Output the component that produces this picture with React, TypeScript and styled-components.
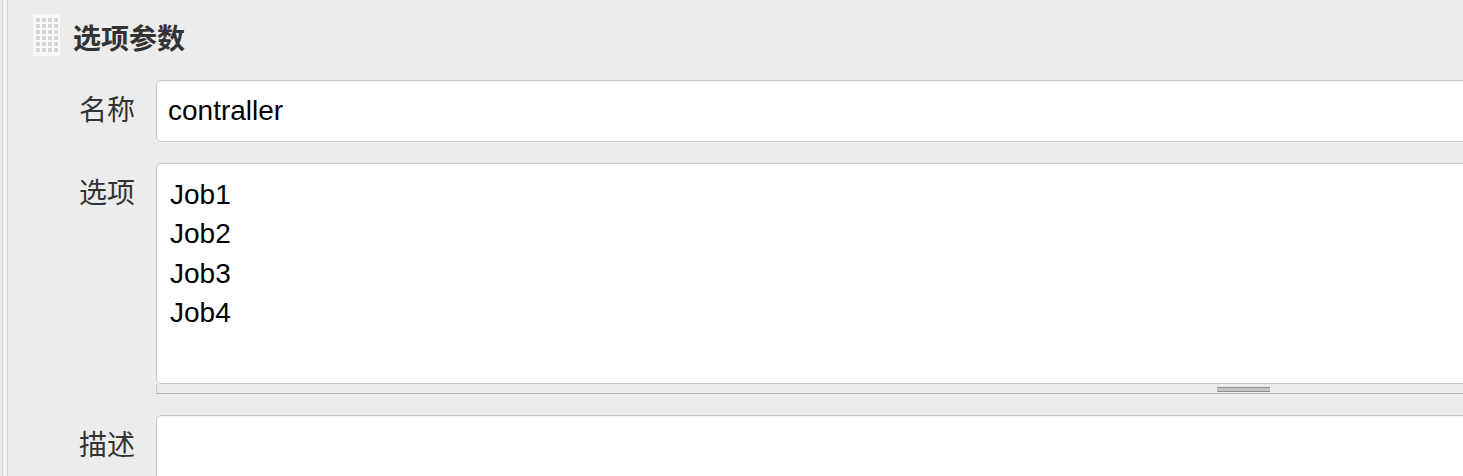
import React, { useState } from "react";
import styled, { createGlobalStyle } from "styled-components";

const GlobalStyle = createGlobalStyle`
	html, body {
		margin: 0;
		padding: 0;
		background: #ececec;
		overflow: hidden;
	}
	body {
		font-family: "Liberation Sans", Arial, "Noto Sans CJK SC", sans-serif;
	}
`;

const App = () => {
	const [name, setName] = useState("contraller");
	const [choices, setChoices] = useState("Job1\nJob2\nJob3\nJob4");
	const [desc, setDesc] = useState("");

	return (
		<>
			<GlobalStyle />
			<Page>
				<Rail>
					<Section>
						<Header>
							<DragHandle />
							<Title>选项参数</Title>
						</Header>
						<Form>
							<Label>名称</Label>
							<TextInput value={name} onChange={(e) => setName(e.target.value)} />

							<Label>选项</Label>
							<TextareaWrap>
								<Textarea value={choices} onChange={(e) => setChoices(e.target.value)} />
								<ResizeBar>
									<Grip />
								</ResizeBar>
							</TextareaWrap>

							<Label>描述</Label>
							<DescBox value={desc} onChange={(e) => setDesc(e.target.value)} />
						</Form>
					</Section>
				</Rail>
			</Page>
		</>
	);
};

// 4 x 6 dotted grip like the jenkins repeatable handle
const DragHandle = () => {
	const dots = [];
	for (let r = 0; r < 6; r++) {
		for (let c = 0; c < 4; c++) {
			dots.push(<rect key={`${r}-${c}`} x={3 + c * 6} y={4 + r * 6} width={4} height={4} fill="#d6d6d6" />);
		}
	}
	return (
		<HandleBox>
			<svg width="27" height="42" viewBox="0 0 27 42">
				<rect x="0" y="0" width="27" height="42" fill="#f8f8f8" />
				{dots}
			</svg>
		</HandleBox>
	);
};

const Page = styled.div`
	padding-left: 2px;
	height: 476px;
	box-sizing: border-box;
`;

const Rail = styled.div`
	height: 100%;
	border-left: 1px solid #d4d4d4;
	background: #f4f4f4;
	padding-left: 4px;
`;

const Section = styled.div`
	height: 100%;
	border-left: 1px solid #d6d6d6;
	background: #ececec;
`;

const Header = styled.div`
	display: flex;
	align-items: center;
	height: 60px;
	padding: 12px 0 0 25px;
	box-sizing: border-box;
`;

const HandleBox = styled.div`
	width: 27px;
	height: 42px;
	margin-right: 13px;
	margin-top: -2px;
	svg {
		display: block;
	}
`;

const Title = styled.h3`
	margin: 0;
	font-size: 28px;
	font-weight: bold;
	color: #333;
	font-family: "Noto Sans CJK SC", sans-serif;
	line-height: 1;
	margin-top: 1px;
`;

const Form = styled.div`
	display: grid;
	grid-template-columns: 127px 1360px;
	column-gap: 21px;
	row-gap: 21px;
	margin-top: 20px;
`;

const Label = styled.div`
	text-align: right;
	font-size: 28px;
	color: #333;
	font-family: "Noto Sans CJK SC", sans-serif;
	line-height: 1;
	padding-top: 14px;
`;

const fieldBase = `
	box-sizing: border-box;
	width: 100%;
	border: 1px solid #c8c8c8;
	border-radius: 5px;
	background: #fff;
	font-family: "Liberation Sans", Arial, sans-serif;
	font-size: 28px;
	color: #000;
	outline: none;
	box-shadow: inset 0 1px 1px rgba(0, 0, 0, 0.04), 0 1px 0 #f6f6f6;
`;

const TextInput = styled.input`
	${fieldBase}
	height: 62px;
	padding: 0 11px;
`;

const TextareaWrap = styled.div`
	display: flex;
	flex-direction: column;
`;

const Textarea = styled.textarea`
	${fieldBase}
	height: 221px;
	padding: 11px 13px 8px;
	line-height: 39.3px;
	resize: none;
	overflow: hidden;
`;

const ResizeBar = styled.div`
	height: 10px;
	box-sizing: border-box;
	border-left: 1px solid #c9c9c9;
	border-bottom: 1px solid #b8b8b8;
	background: #ececec;
	padding-left: 1060px;
	padding-top: 3px;
`;

const Grip = styled.div`
	width: 53px;
	height: 5px;
	box-sizing: border-box;
	border-top: 1px solid #8e8e8e;
	border-bottom: 1px solid #8e8e8e;
	background: #c4c4c4;
`;

const DescBox = styled.textarea`
	${fieldBase}
	height: 80px;
	resize: none;
	padding: 10px 13px;
`;

export default App;
